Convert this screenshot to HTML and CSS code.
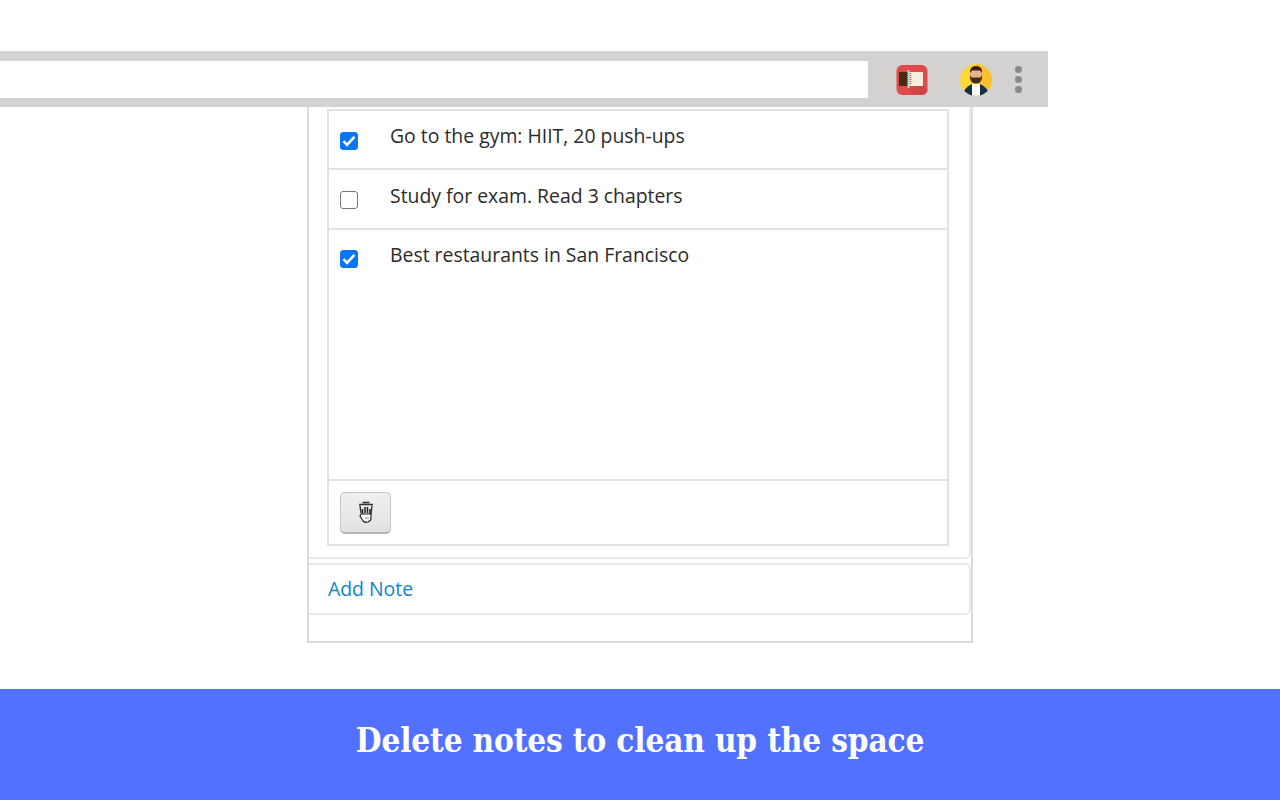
FILE: index.html
```html
<!DOCTYPE html>
<html lang="en">
<head>
<meta charset="utf-8">
<title>Delete notes</title>
<link rel="stylesheet" href="styles.css">
</head>
<body>
<div class="stage">
  <header class="browser">
    <div class="address"></div>
    <div class="tools">
      <svg class="ext" width="32" height="32" viewBox="0 0 32 32">
        <rect x="0.500" y="1" width="31" height="30" rx="6" fill="#e04a4b"/>
        <path d="M13 24 L27 22 L31.500 26 Q31 31 25 31 L19 31 Z" fill="#cf4446"/>
        <rect x="3" y="8" width="10" height="14" fill="#4a2a14"/>
        <rect x="13" y="8" width="14" height="14" fill="#f6eedd"/>
        <rect x="11.500" y="6" width="2" height="18" fill="#c9c9c9"/>
        <path d="M14.500 9v12" stroke="#666" stroke-width="1.500" stroke-dasharray="1 1"/>
      </svg>
      <svg class="avatar" width="32" height="32" viewBox="0 0 32 32">
        <defs><clipPath id="circ"><circle cx="16" cy="16" r="16"/></clipPath></defs>
        <g clip-path="url(#circ)">
          <rect width="32" height="32" fill="#fdd835"/>
          <path d="M16 0 H32 V32 H16 Z" fill="#fbc02d"/>
          <path d="M3 32 Q4 23 12 20 L20 20 Q28 23 29 32 Z" fill="#12304a"/>
          <path d="M12 20 L20 20 L20 32 L12 32 Z" fill="#fff"/>
          <rect x="10" y="5" width="12" height="14" rx="4" fill="#e8b48c"/>
          <path d="M10 11 L10 14 Q11 19.500 16 19.500 Q21 19.500 22 14 L22 11 L20.500 13.500 L11.500 13.500 Z" fill="#4a2a14"/>
          <path d="M10 9 Q9.500 2 16 2 Q22.500 2 22 9 L20 6.500 L12 6.500 Z" fill="#3a2010"/>
        </g>
      </svg>
      <div class="kebab"><span class="dot"></span><span class="dot"></span><span class="dot"></span></div>
    </div>
  </header>

  <main class="panel">
    <section class="card card-list">
      <div class="table">
        <div class="row">
          <span class="box on"><svg width="14" height="12" viewBox="0 0 14 12"><path d="M1.500 6.200 L5 9.800 L12.500 1.800" fill="none" stroke="#fff" stroke-width="2.600"/></svg></span>
          <span class="label">Go to the gym: HIIT, 20 push-ups</span>
        </div>
        <div class="row">
          <span class="box"></span>
          <span class="label">Study for exam. Read 3 chapters</span>
        </div>
        <div class="row row-grow">
          <span class="box on"><svg width="14" height="12" viewBox="0 0 14 12"><path d="M1.500 6.200 L5 9.800 L12.500 1.800" fill="none" stroke="#fff" stroke-width="2.600"/></svg></span>
          <span class="label">Best restaurants in San Francisco</span>
        </div>
        <div class="foot">
          <button class="trash" type="button">
            <svg width="18" height="24" viewBox="0 0 18 24">
              <path d="M5.500 2.500h7M2 4.500h14" stroke="#333" stroke-width="1.500" fill="none"/>
              <path d="M3 5.500 L4 13 M15 5.500 L14 14" stroke="#333" stroke-width="1.400" fill="none"/>
              <path d="M5.500 9 L5.500 14 M8 7 L8 13 M10.500 7 L10.500 13 M13 9 L13 14" stroke="#222" stroke-width="1.500"/>
              <path d="M4 14 L3 16 L6 21 Q8 23 11 22 Q14 21 14 18 L14 14 Z" fill="#fff" stroke="#222" stroke-width="1.200"/>
              <path d="M9 17v2M11 17v2" stroke="#888" stroke-width="1"/>
            </svg>
          </button>
        </div>
      </div>
    </section>
    <section class="card card-add"><a class="add" href="#">Add Note</a></section>
  </main>

  <footer class="banner">Delete notes to clean up the space</footer>
</div>
</body>
</html>
```

FILE: styles.css
```css
* { box-sizing: border-box; }
html, body { margin: 0; padding: 0; background: #fff; }
body { overflow: hidden; }
.stage {
  width: 1280px;
  height: 800px;
  padding-top: 51px;
  display: flex;
  flex-direction: column;
}
.browser {
  width: 1048px;
  height: 56px;
  flex: none;
  background: #d3d2d0;
  display: flex;
  align-items: flex-start;
  padding-top: 10px;
}
.address {
  width: 868px;
  height: 37px;
  background: #fff;
  flex: none;
}
.tools {
  display: flex;
  align-items: center;
  height: 37px;
  padding-left: 28px;
}
.ext { flex: none; }
.avatar { flex: none; margin-left: 32px; }
.kebab {
  display: flex;
  flex-direction: column;
  gap: 3.300px;
  margin-left: 23px;
}
.dot { width: 7px; height: 7px; border-radius: 50%; background: #8a8a8a; }
.panel {
  width: 666px;
  height: 536px;
  flex: none;
  margin-left: 307px;
  border: 2px solid #dcdcdc;
  border-top: 0;
  display: flex;
  flex-direction: column;
  gap: 4px;
}
.card {
  border: 2px solid #e9e9e9;
  border-left: 0;
  border-radius: 0 0 6px 0;
}
.card-list {
  height: 452px;
  border-top: 0;
  padding: 2px 20px 0 18px;
}
.table {
  height: 437px;
  border: 2px solid #e2e2e2;
  display: flex;
  flex-direction: column;
}
.row {
  height: 59.400px;
  flex: none;
  border-bottom: 2px solid #e2e2e2;
  display: flex;
  align-items: flex-start;
  padding-left: 11px;
}
.row-grow { height: 251.200px; }
.box {
  width: 18px;
  height: 18px;
  margin-top: 20.500px;
  border: 1.500px solid #767676;
  border-radius: 3px;
  background: #fff;
  flex: none;
  display: flex;
  align-items: center;
  justify-content: center;
}
.box.on { background: #0a76f6; border-color: #0a76f6; }
.label {
  margin-left: 32px;
  margin-top: 11.300px;
  font: 19.400px/28px "Open Sans", sans-serif;
  color: #2b2b2b;
  white-space: nowrap;
}
.foot { flex: 1; padding: 11px 0 0 11px; }
.trash {
  width: 51px;
  height: 42px;
  padding: 0;
  border: 1px solid #c4c4c4;
  border-bottom: 2px solid #b5b5b5;
  border-radius: 5px;
  background: linear-gradient(#f0f0f0, #e2e2e2);
  display: flex;
  align-items: center;
  justify-content: center;
}
.card-add {
  height: 52px;
  border-top: 2px solid #e9e9e9;
  border-radius: 0 6px 6px 0;
  padding-left: 19px;
  display: flex;
  align-items: center;
}
.add {
  font: 19.400px/28px "Open Sans", sans-serif;
  color: #0a86cf;
  text-decoration: none;
}
.banner {
  margin-top: 46px;
  flex: 1;
  background: #5271ff;
  color: #fff;
  font: bold 33px/1 "DejaVu Serif", serif;
  font-stretch: condensed;
  letter-spacing: -0.130px;
  display: flex;
  align-items: center;
  justify-content: center;
  padding-bottom: 9px;
}
```
